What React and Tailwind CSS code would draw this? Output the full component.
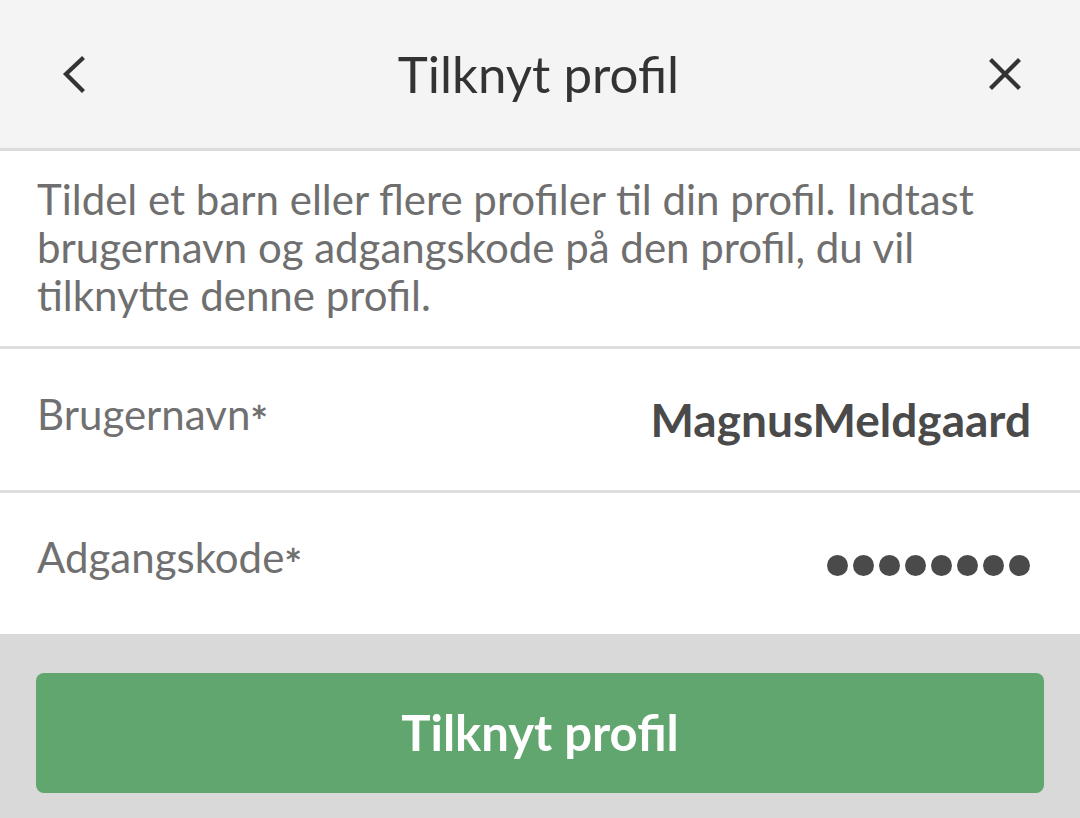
export default function App() {
  return (
    <div className="w-[1080px] h-[818px] flex flex-col bg-white overflow-hidden" style={{ fontFamily: 'Lato, "Noto Sans", sans-serif' }}>
      {/* header */}
      <div className="h-[151px] shrink-0 bg-[#f4f4f4] border-b-[3px] border-[#dcdcdc] flex items-center justify-between px-[56px]">
        <button className="w-[40px] h-[40px] flex items-center justify-center text-[#333]">
          <svg width="40" height="40" viewBox="0 0 40 40" fill="none" stroke="currentColor" strokeWidth="4.2" strokeLinecap="square">
            <path d="M26 5 L10 20 L26 36" />
          </svg>
        </button>
        <h1 className="text-[51px] text-[#333] font-normal leading-none -mt-[2px] ml-[-4px]">Tilknyt profil</h1>
        <button className="w-[40px] h-[40px] flex items-center justify-center text-[#333] -mr-[1px]">
          <svg width="40" height="40" viewBox="0 0 40 40" fill="none" stroke="currentColor" strokeWidth="4.2" strokeLinecap="square">
            <path d="M7 7 L33 33 M33 7 L7 33" />
          </svg>
        </button>
      </div>

      {/* description */}
      <div className="shrink-0 pt-[24px] pb-[27px] px-[37px] border-b-[3px] border-[#dedede]">
        <p className="text-[42px] leading-[48px] text-[#6f6f6f]">
          Tildel et barn eller flere profiler til din profil. Indtast brugernavn og adgangskode på den profil, du vil tilknytte denne profil.
        </p>
      </div>

      {/* fields */}
      <div className="shrink-0 h-[144px] flex items-center justify-between px-[37px] pr-[49px] border-b-[3px] border-[#dedede]">
        <span className="text-[42px] text-[#707070] -mt-[10px]">
          Brugernavn<span className="relative top-[7px] font-bold">*</span>
        </span>
        <span className="text-[46px] font-bold text-[#4a4a4a]">MagnusMeldgaard</span>
      </div>
      <div className="shrink-0 h-[141px] flex items-center justify-between px-[37px] pr-[50px]">
        <span className="text-[42px] text-[#707070] -mt-[12px]">
          Adgangskode<span className="relative top-[7px] font-bold">*</span>
        </span>
        <div className="flex gap-[5px] mt-[3px]">
          {[0, 1, 2, 3, 4, 5, 6, 7].map((i) => (
            <span key={i} className="w-[21px] h-[21px] rounded-full bg-[#4a4a4a]" />
          ))}
        </div>
      </div>

      {/* footer */}
      <div className="flex-1 bg-[#d9d9d9] px-[36px] pt-[39px]">
        <button className="w-full h-[120px] rounded-[8px] bg-[#62a66f] text-white text-[49px] font-bold">
          Tilknyt profil
        </button>
      </div>
    </div>
  );
}
